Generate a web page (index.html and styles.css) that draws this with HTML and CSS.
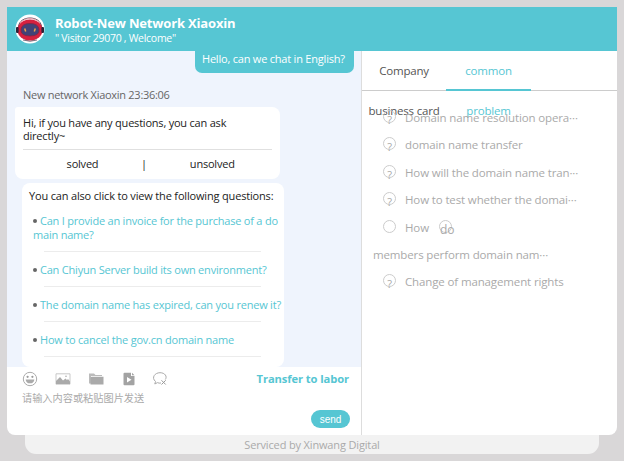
FILE: index.html
```
<!DOCTYPE html>
<html lang="en">
<head>
    <meta charset="UTF-8">
    <meta name="viewport" content="width=device-width, initial-scale=1.0">
    <title>Robot-New Network Xiaoxin</title>
    <link rel="stylesheet" href="styles.css">
</head>
<body>
    <div class="window">
        <header class="header">
            <svg class="avatar" viewBox="0 0 30 30">
                <circle cx="15" cy="15" r="14.5" fill="#fff"/>
                <path d="M3.5 13C4 1 26 1 26.500 13" fill="none" stroke="#594a5c" stroke-width="1"/>
                <ellipse cx="15" cy="16" rx="12.600" ry="10.600" fill="#d5213f"/>
                <path d="M5 8.500Q15 0 25 8.500" fill="none" stroke="#e9a3ae" stroke-width="1"/>
                <rect x="1" y="13" width="2.600" height="6" rx="1" fill="#2b2337"/>
                <rect x="26.400" y="13" width="2.600" height="6" rx="1" fill="#2b2337"/>
                <path d="M6 15Q7 9.500 15 9.500T24 15Q25 22 15 22T6 15Z" fill="#424276" stroke="#812445" stroke-width=".8"/>
                <path d="M9.700 14.500L10.700 17.500M20.300 14.500L19.300 17.500" stroke="#f3a14a" stroke-width="1.500"/>
                <path d="M8 26Q15 28.500 22 26" fill="none" stroke="#594a5c" stroke-width=".8"/>
            </svg>
            <div class="title">
                <h1>Robot-New Network Xiaoxin</h1>
                <p>" Visitor 29070 , Welcome"</p>
            </div>
        </header>

        <main class="content">
            <section class="left">
                <div class="chat">
                    <div class="bubble">Hello, can we chat in English?</div>
                    <div class="time">New network Xiaoxin 23:36:06</div>
                    <div class="answer">
                        <p>Hi, if you have any questions, you can ask<br>directly~</p>
                        <div class="feedback">
                            <span class="solved">solved</span>
                            <span class="divider">|</span>
                            <span class="unsolved">unsolved</span>
                        </div>
                    </div>
                    <div class="questions">
                        <h2>You can also click to view the following questions:</h2>
                        <ul>
                            <li><i class="dot"></i><a>Can I provide an invoice for the purchase of a do<br>main name?</a></li>
                            <li><i class="dot"></i><a>Can Chiyun Server build its own environment?</a></li>
                            <li><i class="dot"></i><a>The domain name has expired, can you renew it?</a></li>
                            <li><i class="dot"></i><a>How to cancel the gov.cn domain name</a></li>
                        </ul>
                    </div>
                </div>

                <div class="editor">
                    <div class="toolbar">
                        <svg viewBox="0 0 16 16">
                            <circle cx="8" cy="8" r="6.700" fill="none" stroke="#aaa" stroke-width="1"/>
                            <circle cx="5.600" cy="5.800" r="1.100" fill="#999"/>
                            <circle cx="10.400" cy="5.800" r="1.100" fill="#999"/>
                            <path d="M3.600 8.400H12.400Q11.700 12.300 8 12.300T3.600 8.400Z" fill="#aaa"/>
                        </svg>
                        <svg viewBox="0 0 16 16">
                            <path d="M1 2.800H15V13.200H1Z" fill="none" stroke="#bbb" stroke-width=".8"/>
                            <path d="M1 13V10L5 6L8 9.500L10.500 7.500L12 9L13 8L15 10.500V13Z" fill="#aaa"/>
                            <circle cx="11" cy="5.300" r=".8" fill="#aaa"/>
                        </svg>
                        <svg viewBox="0 0 16 16">
                            <path d="M1 12.500V2.500H6L7.500 4H14V5H3V12.500Z" fill="#bbb"/>
                            <path d="M3.600 5.700H15.500V13.500H2.500V6.500Z" fill="#aaa"/>
                        </svg>
                        <svg viewBox="0 0 16 16">
                            <path d="M3.500 1.700H10V5H13.500V13.300Q13.500 14.300 12.500 14.300H3.500Q2.500 14.300 2.500 13.300V2.700Q2.500 1.700 3.500 1.700Z" fill="#a3a3a3"/>
                            <path d="M11 1.700L13.500 4.200H11Z" fill="#a3a3a3"/>
                            <path d="M6 6L10.500 8.800L6 11.600Z" fill="#fff"/>
                        </svg>
                        <svg class="close-chat" viewBox="0 0 16 16">
                            <path d="M9 12Q7 12.500 5.500 11.600L2.800 13L3.500 10.500C-1 6.500 3 1.700 8 1.700C13 1.700 15.500 5.500 13.300 8.500" fill="none" stroke="#aaa" stroke-width="1"/>
                            <path d="M9.500 9.300L13.700 13.500M13.700 9.300L9.500 13.500" stroke="#999" stroke-width="1"/>
                        </svg>
                        <a class="transfer">Transfer to labor</a>
                    </div>
                    <div class="placeholder">请输入内容或粘贴图片发送</div>
                    <button class="send">send</button>
                </div>
            </section>

            <aside class="right">
                <nav class="tabs">
                    <a class="tab">Company<br>business card</a>
                    <a class="tab active">common<br>problem</a>
                </nav>
                <ul class="faq">
                    <li><i class="mark">?</i><span>Domain name resolution opera···</span></li>
                    <li><i class="mark">?</i><span>domain name transfer</span></li>
                    <li><i class="mark">?</i><span>How will the domain name tran···</span></li>
                    <li><i class="mark">?</i><span>How to test whether the domai···</span></li>
                    <li><i class="mark"></i><span>How</span><i class="mark word">do</i></li>
                    <li class="wrapped"><span>members perform domain nam···</span></li>
                    <li><i class="mark">?</i><span>Change of management rights</span></li>
                </ul>
            </aside>
        </main>
    </div>
    <footer class="footer">Serviced by Xinwang Digital</footer>
</body>
</html>
```
FILE: styles.css
```
* {
    box-sizing: border-box;
}

body {
    margin: 0;
    padding: 7px;
    height: 461px;
    overflow: hidden;
    background-color: #d9d7d8;
    font-family: "Open Sans", "Noto Sans", "Noto Sans CJK SC", sans-serif;
    font-size: 11px;
    color: #222;
}

h1, h2, p, ul {
    margin: 0;
    padding: 0;
    list-style: none;
    font-weight: normal;
}

i {
    font-style: normal;
}

.window {
    width: 610px;
    height: 428px;
    overflow: hidden;
    border-radius: 0 0 8px 8px;
    background-color: #fff;
}

.header {
    display: flex;
    height: 44px;
    padding: 7px 0 0 8px;
    background-color: #56c6d3;
    color: #fff;
}

.avatar {
    width: 30px;
    height: 30px;
}

.title {
    padding-left: 10px;
    white-space: nowrap;
}

.title h1 {
    font-size: 13px;
    font-weight: bold;
    line-height: 18px;
    letter-spacing: -0.16px;
}

.title p {
    font-size: 10.5px;
    line-height: 12px;
    letter-spacing: -0.28px;
}

.content {
    display: flex;
    height: 384px;
}

.left {
    width: 354px;
}

.chat {
    display: flex;
    flex-direction: column;
    align-items: flex-start;
    height: 316px;
    padding-left: 8px;
    background-color: #eff4fd;
    letter-spacing: -0.21px;
    white-space: nowrap;
}

.bubble {
    align-self: flex-end;
    width: 159px;
    height: 22px;
    margin-right: 7px;
    padding-left: 7px;
    border-radius: 0 0 7px 7px;
    background-color: #56c6d3;
    color: #fff;
    line-height: 16px;
}

.time {
    height: 34px;
    padding: 14px 0 0 8px;
    line-height: 16px;
    letter-spacing: -0.28px;
    color: #666;
}

.answer {
    width: 265px;
    height: 72px;
    padding: 9px 8px 0;
    border-radius: 3px 8px 8px 8px;
    background-color: #fff;
}

.answer p {
    height: 34px;
    border-bottom: 1px solid #e0e0e0;
    line-height: 13px;
}

.feedback {
    display: flex;
    height: 28px;
    line-height: 28px;
}

.feedback .solved {
    width: 118px;
    padding-left: 1px;
    text-align: center;
}

.feedback .unsolved {
    flex: 1;
    padding-left: 43px;
}

.questions {
    width: 262px;
    height: 184px;
    margin: 4px 0 0 7px;
    padding: 5px 0 0 7px;
    border-radius: 8px;
    background-color: #fff;
}

.questions h2 {
    font-size: 11px;
    line-height: 16px;
    letter-spacing: -0.17px;
}

.questions ul {
    padding: 10px 0 0 4px;
}

.questions li {
    height: 35px;
    line-height: 14px;
    color: #56c6d3;
    background: linear-gradient(#ececec, #ececec) 11px 100% / 217px 1px no-repeat;
    padding-top: 11px;
}

.questions li:first-child {
    height: 38px;
    padding-top: 0;
}

.dot {
    display: inline-block;
    width: 4px;
    height: 4px;
    margin-right: 3px;
    border-radius: 50%;
    background-color: #666;
    vertical-align: 2px;
}

.editor {
    display: flex;
    flex-direction: column;
    height: 68px;
    padding: 4px 11px 0 15px;
}

.toolbar {
    display: flex;
    align-items: center;
    gap: 17px;
    height: 16px;
}

.toolbar svg {
    flex: none;
    width: 16px;
    height: 16px;
}

.toolbar .close-chat {
    margin-left: -2px;
}

.transfer {
    margin: -2px 1px 0 auto;
    font-size: 11.2px;
    font-weight: bold;
    letter-spacing: -0.1px;
    color: #56c6d3;
}

.placeholder {
    height: 23px;
    font-size: 10.2px;
    line-height: 23px;
    color: #aaa;
}

.send {
    align-self: flex-end;
    width: 39px;
    height: 18px;
    padding: 0;
    border: none;
    border-radius: 9px;
    background-color: #56c6d3;
    color: #fff;
    font-family: "Liberation Sans", sans-serif;
    font-size: 10px;
}

.right {
    flex: 1;
    border-left: 1px solid #ddd;
    font-size: 11.5px;
    letter-spacing: -0.13px;
    white-space: nowrap;
}

/* second line of each tab label hangs below the bar */
.tabs {
    display: flex;
    height: 40px;
    border-bottom: 1px solid #ccc;
    line-height: 40px;
    text-align: center;
    letter-spacing: -0.2px;
    color: #555;
}

.tab {
    width: 84px;
    height: 40px;
}

.tab.active {
    width: 85px;
    border-bottom: 2px solid #56c6d3;
    color: #56c6d3;
}

.faq {
    padding: 13px 0 0 21px;
    color: #aaa;
}

.faq li {
    display: flex;
    height: 27.4px;
    line-height: 27.4px;
}

.faq li.wrapped {
    margin-left: -10px;
}

.mark {
    width: 13px;
    height: 13px;
    margin: 6px 9px 0 0;
    border: 1px solid #ccc;
    border-radius: 50%;
    line-height: 18px;
    text-align: center;
    font-size: 11px;
}

.mark.word {
    margin-left: 10px;
    font-size: 12px;
}

.footer {
    width: 574px;
    height: 19px;
    margin-left: 18px;
    border-radius: 0 0 11px 11px;
    background-color: #f2f2f2;
    color: #aaa;
    line-height: 19px;
    letter-spacing: -0.15px;
    text-align: center;
}
```
